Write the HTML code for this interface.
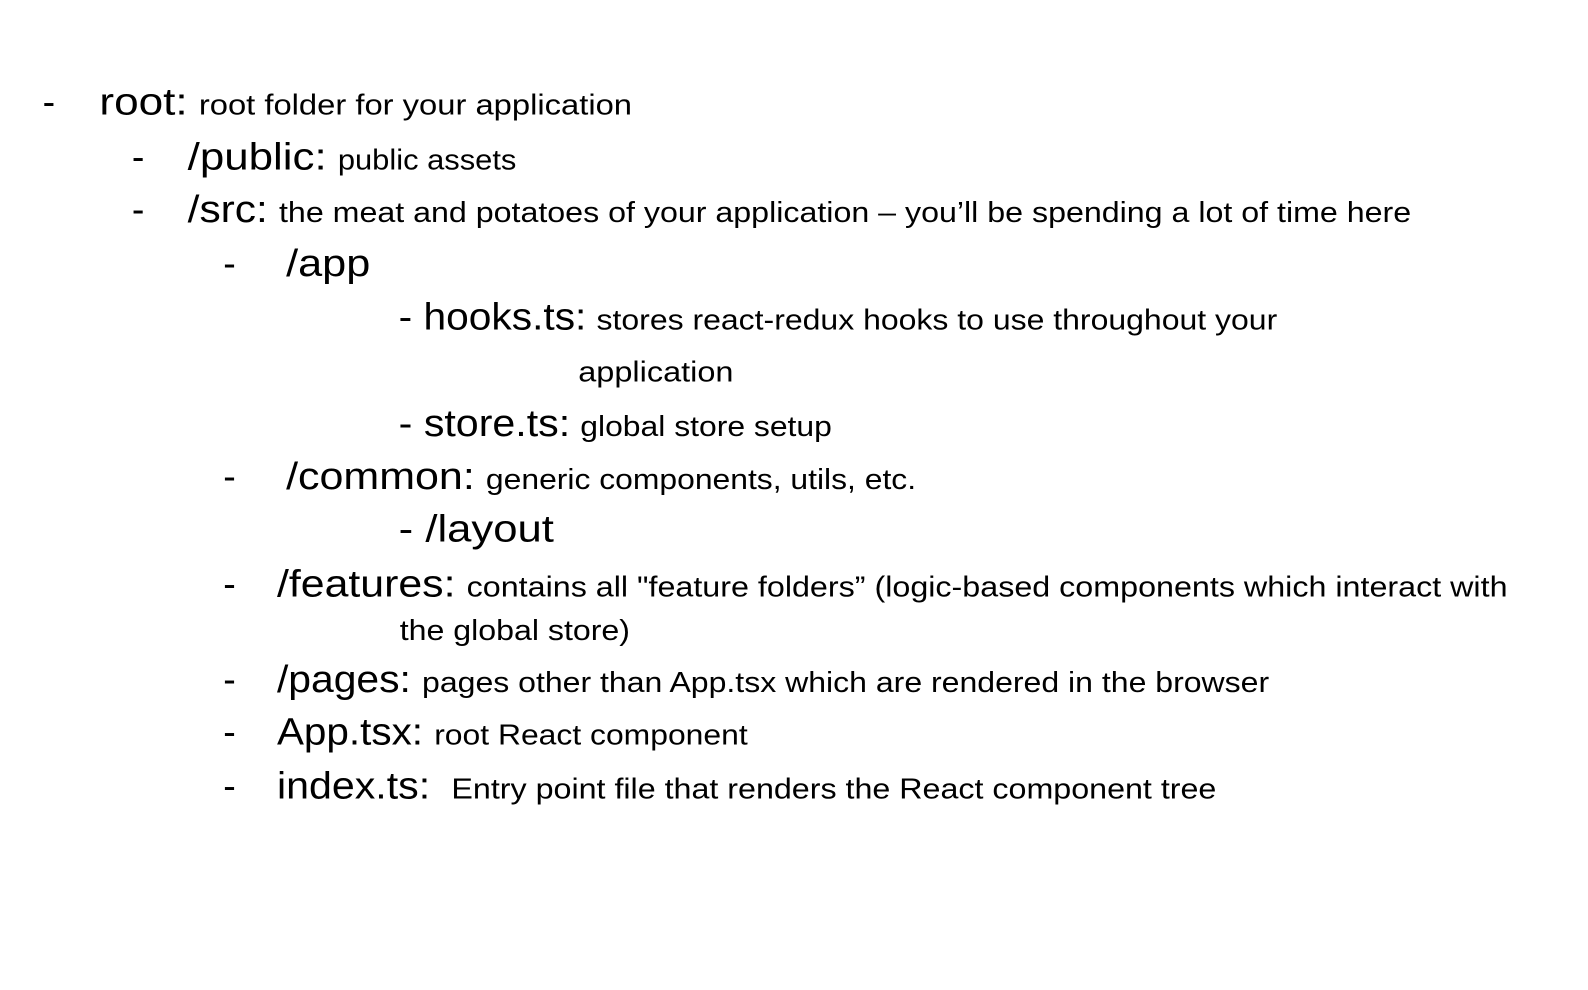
<!DOCTYPE html>
<html><head><meta charset="utf-8"><style>
html,body{margin:0;padding:0;background:#fff;width:1588px;height:990px;overflow:hidden}
svg{display:block}
text{font-family:"Liberation Sans",sans-serif;fill:#000}
.b{font-size:37px}
.s{font-size:28px}
</style></head><body>
<svg width="1588" height="990" xmlns="http://www.w3.org/2000/svg">
<g transform="scale(1.0145)">
<text class="b" x="42" y="113">-</text>
<text class="b" x="98" y="113" textLength="87" lengthAdjust="spacingAndGlyphs">root:</text>
<text class="s" x="196" y="113" textLength="427" lengthAdjust="spacingAndGlyphs">root folder for your application</text>

<text class="b" x="130" y="167">-</text>
<text class="b" x="185" y="167" textLength="137" lengthAdjust="spacingAndGlyphs">/public:</text>
<text class="s" x="333" y="167" textLength="176" lengthAdjust="spacingAndGlyphs">public assets</text>

<text class="b" x="130" y="219">-</text>
<text class="b" x="185" y="219" textLength="79" lengthAdjust="spacingAndGlyphs">/src:</text>
<text class="s" x="275" y="219" textLength="1116" lengthAdjust="spacingAndGlyphs">the meat and potatoes of your application – you’ll be spending a lot of time here</text>

<text class="b" x="220" y="272">-</text>
<text class="b" x="282" y="272" textLength="83" lengthAdjust="spacingAndGlyphs">/app</text>

<text class="b" x="393" y="325" textLength="185" lengthAdjust="spacingAndGlyphs">- hooks.ts:</text>
<text class="s" x="588" y="325" textLength="671" lengthAdjust="spacingAndGlyphs">stores react-redux hooks to use throughout your</text>
<text class="s" x="570" y="376" textLength="153" lengthAdjust="spacingAndGlyphs">application</text>

<text class="b" x="393" y="430" textLength="169" lengthAdjust="spacingAndGlyphs">- store.ts:</text>
<text class="s" x="572" y="430" textLength="248" lengthAdjust="spacingAndGlyphs">global store setup</text>

<text class="b" x="220" y="482">-</text>
<text class="b" x="282" y="482" textLength="186" lengthAdjust="spacingAndGlyphs">/common:</text>
<text class="s" x="479" y="482" textLength="424" lengthAdjust="spacingAndGlyphs">generic components, utils, etc.</text>

<text class="b" x="393" y="534" textLength="153" lengthAdjust="spacingAndGlyphs">- /layout</text>

<text class="b" x="220" y="588">-</text>
<text class="b" x="273" y="588" textLength="176" lengthAdjust="spacingAndGlyphs">/features:</text>
<text class="s" x="460" y="588" textLength="1026" lengthAdjust="spacingAndGlyphs">contains all "feature folders” (logic-based components which interact with</text>
<text class="s" x="394" y="631" textLength="227" lengthAdjust="spacingAndGlyphs">the global store)</text>

<text class="b" x="220" y="682">-</text>
<text class="b" x="273" y="682" textLength="132" lengthAdjust="spacingAndGlyphs">/pages:</text>
<text class="s" x="416" y="682" textLength="835" lengthAdjust="spacingAndGlyphs">pages other than App.tsx which are rendered in the browser</text>

<text class="b" x="220" y="734">-</text>
<text class="b" x="273" y="734" textLength="144" lengthAdjust="spacingAndGlyphs">App.tsx:</text>
<text class="s" x="428" y="734" textLength="309" lengthAdjust="spacingAndGlyphs">root React component</text>

<text class="b" x="220" y="787">-</text>
<text class="b" x="273" y="787" textLength="151" lengthAdjust="spacingAndGlyphs">index.ts:</text>
<text class="s" x="445" y="787" textLength="754" lengthAdjust="spacingAndGlyphs">Entry point file that renders the React component tree</text>
</g>
</svg>
</body></html>
